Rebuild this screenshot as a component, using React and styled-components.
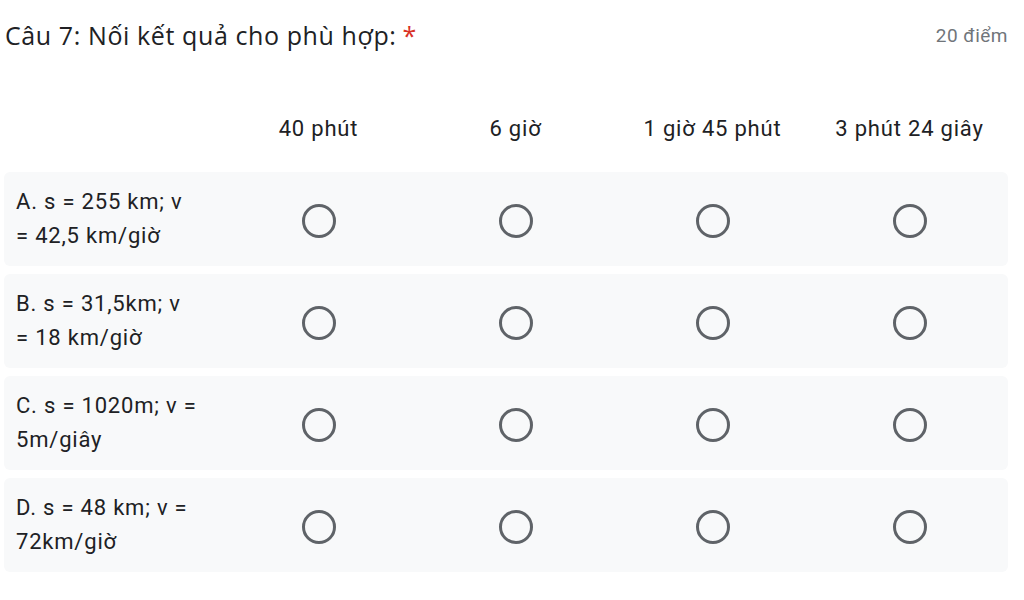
import React from "react";
import styled, { createGlobalStyle } from "styled-components";

const Global = createGlobalStyle`
  html, body { margin: 0; padding: 0; background: #fff; }
  body { font-family: Roboto, "Noto Sans", sans-serif; color: #202124; }
`;

const Page = styled.div`
  width: 1024px;
  height: 600px;
  padding: 0 16px 0 4px;
  box-sizing: border-box;
  overflow: hidden;
`;

const TitleBar = styled.div`
  display: flex;
  justify-content: space-between;
  align-items: center;
  height: 70px;
  padding-left: 1px;
`;

const Title = styled.div`
  font-family: "Open Sans", Roboto, sans-serif;
  font-size: 25px;
  color: #202124;
  letter-spacing: 0.6px;
`;

const Required = styled.span`
  color: #d93025;
  margin-left: 6px;
`;

const Points = styled.div`
  font-family: Roboto, sans-serif;
  font-size: 19px;
  letter-spacing: 0.5px;
  color: #70757a;
`;

const Grid = styled.div`
  display: flex;
  flex-direction: column;
  gap: 8px;
  margin-top: 38px;
`;

const Row = styled.div`
  display: grid;
  grid-template-columns: 216px repeat(4, 197px);
  align-items: center;
  min-height: ${(p) => (p.$header ? "40px" : "94px")};
  background: ${(p) => (p.$header ? "transparent" : "#f8f9fa")};
  border-radius: 6px;
  margin-bottom: ${(p) => (p.$header ? "16px" : "0")};
`;

const ColLabel = styled.div`
  text-align: center;
  font-size: 22px;
  letter-spacing: 0.8px;
  color: #202124;
`;

const RowLabel = styled.div`
  padding-left: 12px;
  padding-right: 22px;
  font-size: 22px;
  letter-spacing: 0.8px;
  line-height: 34px;
  color: #202124;
`;

const Cell = styled.div`
  display: flex;
  justify-content: center;
  align-items: center;
  padding-top: 3px;
`;

const Radio = styled.div`
  width: 34px;
  height: 34px;
  box-sizing: border-box;
  border: 3px solid #5f6368;
  border-radius: 50%;
`;

const cols = ["40 phút", "6 giờ", "1 giờ 45 phút", "3 phút 24 giây"];
const rows = [
  "A. s = 255 km; v = 42,5 km/giờ",
  "B. s = 31,5km; v = 18 km/giờ",
  "C. s = 1020m; v = 5m/giây",
  "D. s = 48 km; v = 72km/giờ",
];

export default function App() {
  return (
    <Page>
      <Global />
      <TitleBar>
        <Title>
          Câu 7: Nối kết quả cho phù hợp:<Required>*</Required>
        </Title>
        <Points>20 điểm</Points>
      </TitleBar>
      <Grid>
        <Row $header>
          <div />
          {cols.map((c) => (
            <ColLabel key={c}>{c}</ColLabel>
          ))}
        </Row>
        {rows.map((r) => (
          <Row key={r}>
            <RowLabel>{r}</RowLabel>
            {cols.map((c) => (
              <Cell key={c}>
                <Radio />
              </Cell>
            ))}
          </Row>
        ))}
      </Grid>
    </Page>
  );
}
